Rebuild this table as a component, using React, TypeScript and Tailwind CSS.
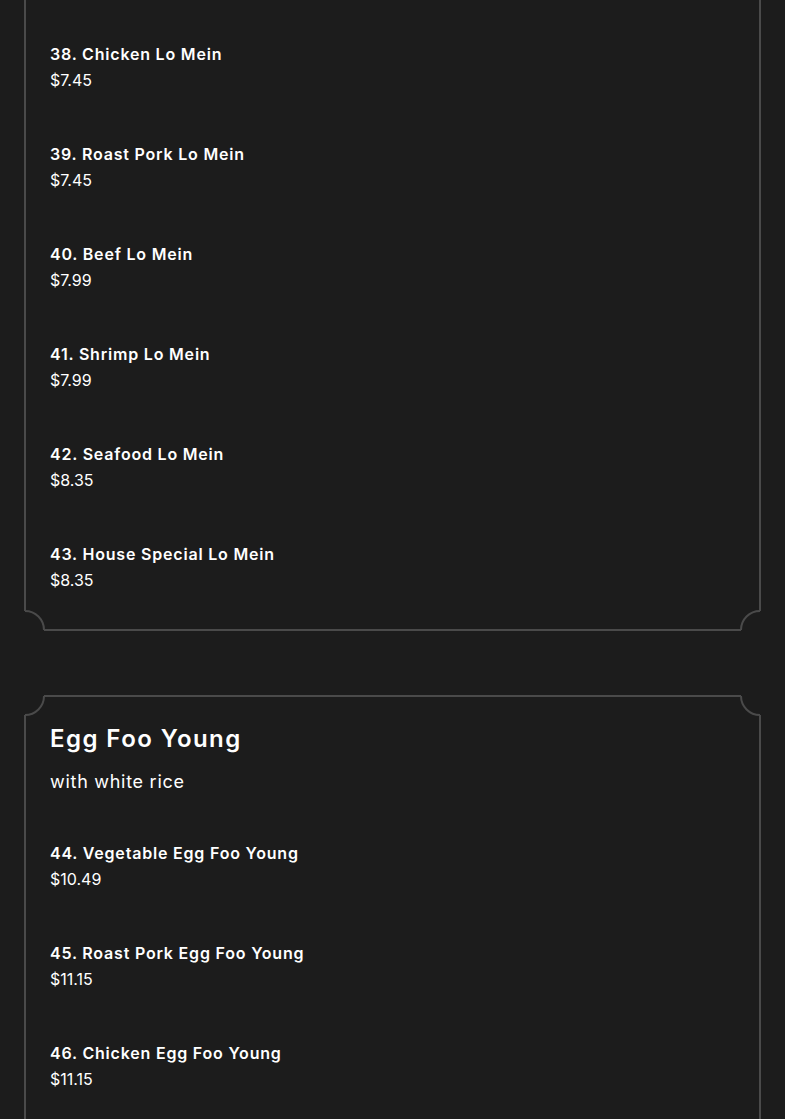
import React from 'react';

type Item = { name: string; price: string };

const loMein: Item[] = [
  { name: '38. Chicken Lo Mein', price: '$7.45' },
  { name: '39. Roast Pork Lo Mein', price: '$7.45' },
  { name: '40. Beef Lo Mein', price: '$7.99' },
  { name: '41. Shrimp Lo Mein', price: '$7.99' },
  { name: '42. Seafood Lo Mein', price: '$8.35' },
  { name: '43. House Special Lo Mein', price: '$8.35' },
];

const eggFooYoung: Item[] = [
  { name: '44. Vegetable Egg Foo Young', price: '$10.49' },
  { name: '45. Roast Pork Egg Foo Young', price: '$11.15' },
  { name: '46. Chicken Egg Foo Young', price: '$11.15' },
];

// scooped corner, drawn over the card's own border corner
const Corner = ({ pos }: { pos: 'tl' | 'tr' | 'bl' | 'br' }) => {
  const place = {
    tl: 'top-[-2px] left-[-2px]',
    tr: 'top-[-2px] right-[-2px] -scale-x-100',
    bl: 'bottom-[-2px] left-[-2px] -scale-y-100',
    br: 'bottom-[-2px] right-[-2px] -scale-100',
  }[pos];
  return (
    <svg className={`absolute ${place}`} width="22" height="22" viewBox="0 0 22 22">
      <rect x="0" y="0" width="22" height="22" fill="#1c1c1c" />
      <path d="M1 20 A19 19 0 0 0 20 1" fill="none" stroke="#4a4a4a" strokeWidth="2" />
      <rect x="20" y="0" width="2" height="2" fill="#4a4a4a" />
      <rect x="0" y="20" width="2" height="2" fill="#4a4a4a" />
    </svg>
  );
};

const MenuItem = ({ item }: { item: Item }) => (
  <div className="mb-[48px] last:mb-0">
    <div className="text-[16px] leading-[28px] font-semibold tracking-[0.05em] text-white">{item.name}</div>
    <div className="text-[16px] leading-6 text-white">{item.price}</div>
  </div>
);

export default function App() {
  return (
    <div
      className="min-h-screen w-full bg-[#1c1c1c] px-6 overflow-hidden"
      style={{ fontFamily: 'Inter, "Open Sans", sans-serif' }}
    >
      <div className="relative border-2 border-t-0 border-[#4a4a4a] px-6 pt-[40px] pb-[37px]">
        <Corner pos="bl" />
        <Corner pos="br" />
        {loMein.map((it) => (
          <MenuItem key={it.name} item={it} />
        ))}
      </div>

      <div className="relative mt-[64px] border-2 border-[#4a4a4a] px-6 pt-[26px] pb-10">
        <Corner pos="tl" />
        <Corner pos="tr" />
        <h2 className="text-[24px] leading-8 font-semibold tracking-[0.06em] text-white">Egg Foo Young</h2>
        <p className="text-[18px] leading-7 tracking-[0.04em] text-white mt-[13px] mb-[43px]">with white rice</p>
        {eggFooYoung.map((it) => (
          <MenuItem key={it.name} item={it} />
        ))}
      </div>
    </div>
  );
}
